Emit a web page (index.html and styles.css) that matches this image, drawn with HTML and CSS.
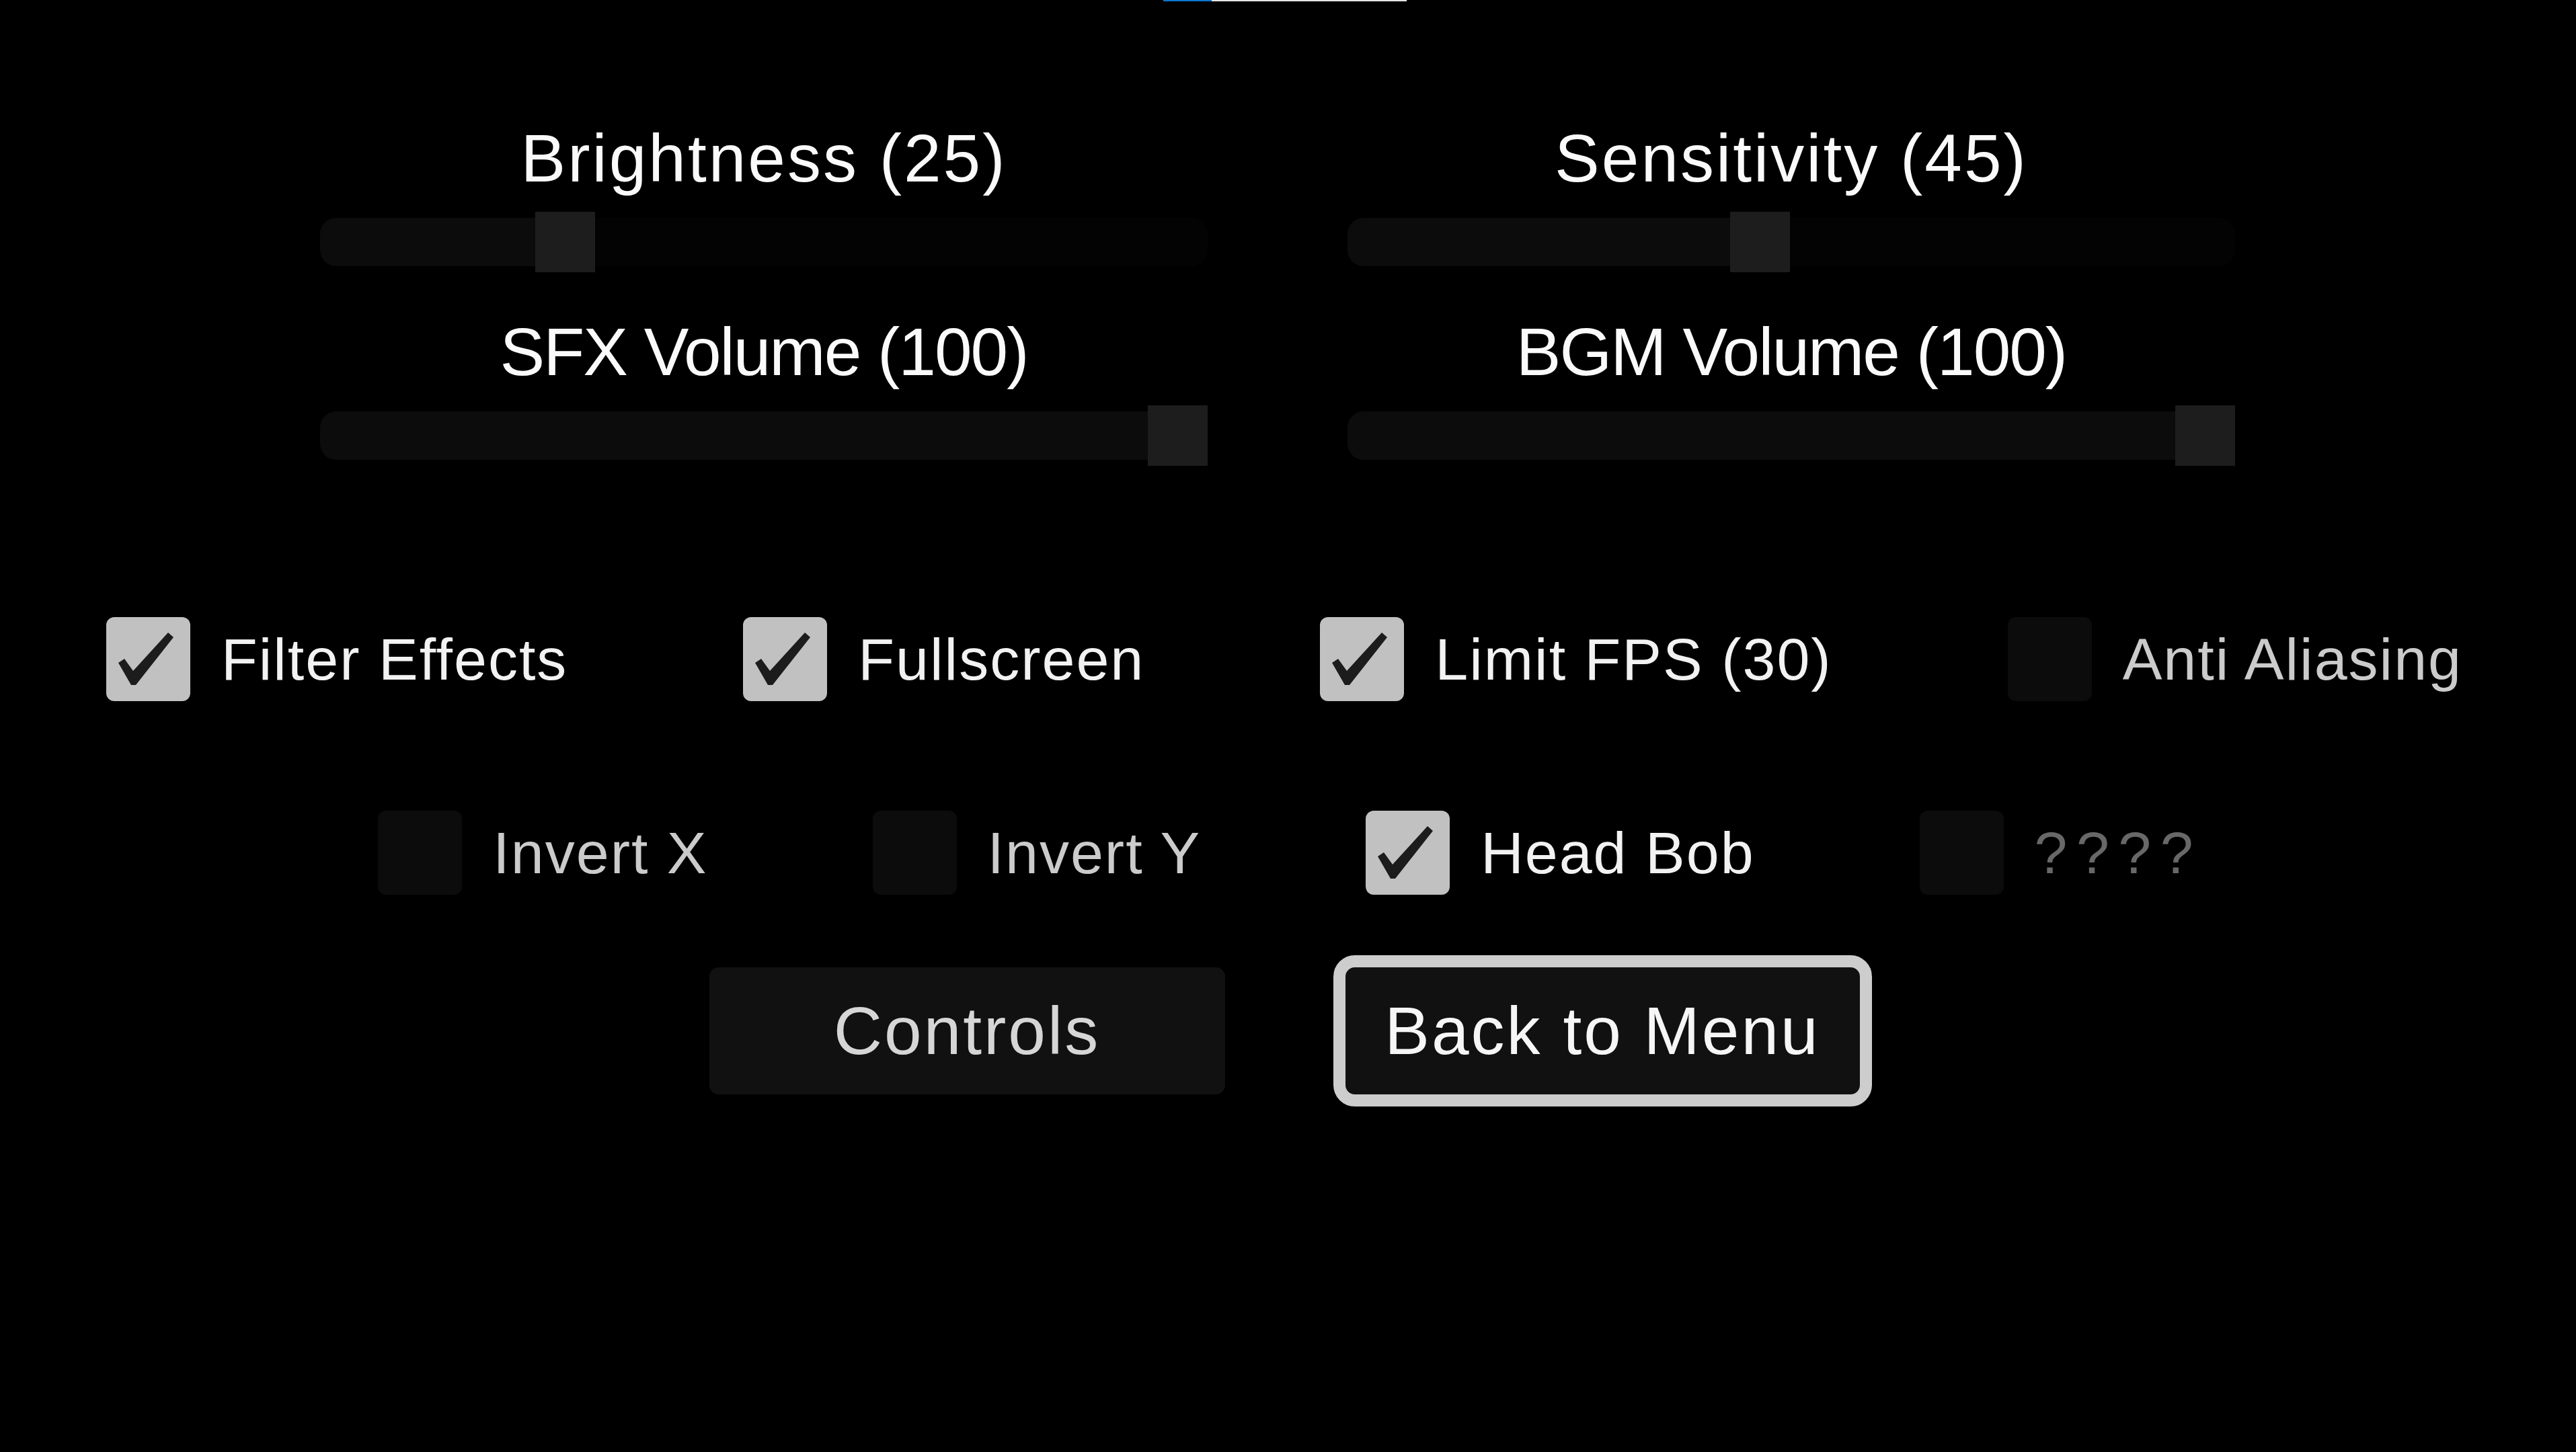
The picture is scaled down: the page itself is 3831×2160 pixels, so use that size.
FILE: index.html
```html
<!DOCTYPE html>
<html>
<head>
	<meta charset="utf-8"/>
	<title>Settings</title>
	<link rel="stylesheet" href="styles.css">
</head>
<body>
	<div class="top">
		<div class="loadbar"><span class="loadbar-fill"></span></div>
	</div>
	<div class="settings">
		<div class="sliders">
			<div class="setting">
				<div class="setting-title">Brightness (25)</div>
				<div class="slider" style="--value:.26"><span class="slider-fill"></span><span class="slider-thumb"></span></div>
			</div>
			<div class="setting">
				<div class="setting-title">Sensitivity (45)</div>
				<div class="slider" style="--value:.462"><span class="slider-fill"></span><span class="slider-thumb"></span></div>
			</div>
			<div class="setting">
				<div class="setting-title narrow">SFX Volume (100)</div>
				<div class="slider" style="--value:1"><span class="slider-fill"></span><span class="slider-thumb"></span></div>
			</div>
			<div class="setting">
				<div class="setting-title narrow">BGM Volume (100)</div>
				<div class="slider" style="--value:1"><span class="slider-fill"></span><span class="slider-thumb"></span></div>
			</div>
		</div>

		<div class="toggles">
			<div class="toggle on">
				<span class="box"><svg viewBox="0 0 125 125"><path d="M18 68 L27 62 L40 80 L92 23 L100 30 L44 101 L37 101 Z"/></svg></span>
				<span class="toggle-text">Filter Effects</span>
			</div>
			<div class="toggle on">
				<span class="box"><svg viewBox="0 0 125 125"><path d="M18 68 L27 62 L40 80 L92 23 L100 30 L44 101 L37 101 Z"/></svg></span>
				<span class="toggle-text">Fullscreen</span>
			</div>
			<div class="toggle on">
				<span class="box"><svg viewBox="0 0 125 125"><path d="M18 68 L27 62 L40 80 L92 23 L100 30 L44 101 L37 101 Z"/></svg></span>
				<span class="toggle-text">Limit FPS (30)</span>
			</div>
			<div class="toggle">
				<span class="box"></span>
				<span class="toggle-text">Anti Aliasing</span>
			</div>
		</div>

		<div class="toggles second">
			<div class="toggle">
				<span class="box"></span>
				<span class="toggle-text">Invert X</span>
			</div>
			<div class="toggle">
				<span class="box"></span>
				<span class="toggle-text">Invert Y</span>
			</div>
			<div class="toggle on">
				<span class="box"><svg viewBox="0 0 125 125"><path d="M18 68 L27 62 L40 80 L92 23 L100 30 L44 101 L37 101 Z"/></svg></span>
				<span class="toggle-text">Head Bob</span>
			</div>
			<div class="toggle locked">
				<span class="box"></span>
				<span class="toggle-text">? ? ? ?</span>
			</div>
		</div>

		<div class="buttons">
			<button class="btn">Controls</button>
			<button class="btn focused">Back to Menu</button>
		</div>
	</div>
</body>
</html>
```

FILE: styles.css
```css
html, body { height:100%; overflow:hidden; }
body { margin:0; background:#000; color:#f4f4f4; font-family:"Liberation Sans", Arial, sans-serif; }

.top { display:flex; justify-content:center; padding-right:9px; }
.loadbar { width:362px; height:2px; background:#e6e6e6; display:flex; }
.loadbar-fill { width:72px; background:#0a74d2; }

.settings { padding-top:183px; }

.sliders { display:grid; grid-template-columns:1320px 1320px; column-gap:208px; row-gap:68px; justify-content:center; padding-right:31px; }
.setting-title { font-size:100px; line-height:100px; text-align:center; letter-spacing:3px; color:#fafafa; }
.setting-title.narrow { letter-spacing:-2px; }
.slider { position:relative; height:72px; margin:39px 0 9px; background:#030303; border-radius:24px; }
.slider-fill { position:absolute; left:0; top:0; bottom:0; width:calc((100% - 89px) * var(--value) + 44px); background:#0c0c0c; border-radius:24px 0 0 24px; }
.slider-thumb { position:absolute; top:-9px; width:89px; height:90px; left:calc((100% - 89px) * var(--value)); background:#1d1d1d; }

.toggles { display:flex; justify-content:center; gap:261px; padding-right:11px; margin-top:225px; }
.toggles.second { gap:245px; margin-top:163px; }
.toggle { display:flex; align-items:center; gap:46px; }
.box { width:125px; height:125px; border-radius:12px; background:#0c0c0c; display:block; }
.box svg { width:125px; height:125px; display:block; fill:#1c1c1c; }
.toggle.on .box { background:#c1c1c1; }
.toggle-text { font-size:88px; line-height:88px; letter-spacing:2px; color:#cbcbcb; }
.toggle.on .toggle-text { color:#f2f2f2; }
.toggle.locked .toggle-text { color:#686868; letter-spacing:-4px; word-spacing:-3px; }

.buttons { display:flex; justify-content:center; gap:179px; padding-right:11px; margin-top:108px; }
.btn { width:767px; height:189px; background:#111; border:0; border-radius:14px; padding:0; font-family:"Liberation Sans", Arial, sans-serif; font-size:100px; letter-spacing:3px; color:#d6d6d6; }
.btn.focused { width:765px; outline:18px solid #cdcdcd; color:#f6f6f6; }
```
